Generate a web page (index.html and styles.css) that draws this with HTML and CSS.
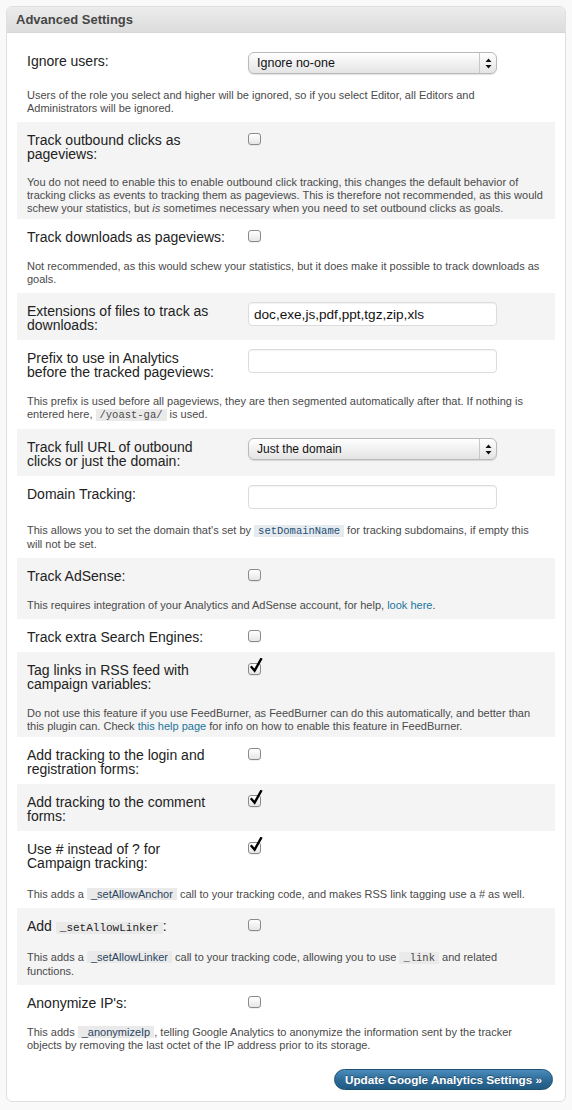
FILE: index.html
```html
<!DOCTYPE html>
<html>
<head>
<meta charset="utf-8">
<title>Advanced Settings</title>
<link rel="stylesheet" href="styles.css">
</head>
<body>
<div class="postbox">
  <h3 class="hndle">Advanced Settings</h3>
  <div class="inside">
    <div class="row">
      <div class="lbl">Ignore users:</div>
      <div class="ctl"><div class="select big"><span class="sel-text">Ignore no-one</span><span class="sel-arrows"><svg width="7" height="11" viewBox="0 0 7 11"><path d="M3.5 0.5 L6.5 4 L0.5 4 Z M0.5 7 L6.5 7 L3.5 10.5 Z" fill="#111"/></svg></span></div></div>
      <p class="desc">Users of the role you select and higher will be ignored, so if you select Editor, all Editors and Administrators will be ignored.</p>
    </div>
    <div class="row alt pb-sm">
      <div class="lbl">Track outbound clicks as pageviews:</div>
      <div class="ctl"><span class="cb"></span></div>
      <p class="desc mt-sm">You do not need to enable this to enable outbound click tracking, this changes the default behavior of tracking clicks as events to tracking them as pageviews. This is therefore not recommended, as this would schew your statistics, but <em>is</em> sometimes necessary when you need to set outbound clicks as goals.</p>
    </div>
    <div class="row">
      <div class="lbl">Track downloads as pageviews:</div>
      <div class="ctl"><span class="cb"></span></div>
      <p class="desc">Not recommended, as this would schew your statistics, but it does make it possible to track downloads as goals.</p>
    </div>
    <div class="row alt">
      <div class="lbl">Extensions of files to track as downloads:</div>
      <div class="ctl"><input class="txt" type="text" value="doc,exe,js,pdf,ppt,tgz,zip,xls"></div>
    </div>
    <div class="row">
      <div class="lbl">Prefix to use in Analytics<br>before the tracked pageviews:</div>
      <div class="ctl"><input class="txt" type="text" value=""></div>
      <p class="desc">This prefix is used before all pageviews, they are then segmented automatically after that. If nothing is entered here, <code class="mono">/yoast-ga/</code> is used.</p>
    </div>
    <div class="row alt">
      <div class="lbl">Track full URL of outbound clicks or just the domain:</div>
      <div class="ctl"><div class="select"><span class="sel-text">Just the domain</span><span class="sel-arrows"><svg width="7" height="11" viewBox="0 0 7 11"><path d="M3.5 0.5 L6.5 4 L0.5 4 Z M0.5 7 L6.5 7 L3.5 10.5 Z" fill="#111"/></svg></span></div></div>
    </div>
    <div class="row">
      <div class="lbl">Domain Tracking:</div>
      <div class="ctl"><input class="txt" type="text" value=""></div>
      <p class="desc">This allows you to set the domain that's set by <code class="mono blue">setDomainName</code> for tracking subdomains, if empty this will not be set.</p>
    </div>
    <div class="row alt">
      <div class="lbl">Track AdSense:</div>
      <div class="ctl"><span class="cb"></span></div>
      <p class="desc">This requires integration of your Analytics and AdSense account, for help, <a href="#">look here</a>.</p>
    </div>
    <div class="row">
      <div class="lbl">Track extra Search Engines:</div>
      <div class="ctl"><span class="cb"></span></div>
    </div>
    <div class="row alt pb-sm">
      <div class="lbl">Tag links in RSS feed with campaign variables:</div>
      <div class="ctl"><span class="cb on"><svg class="tick" width="14" height="16" viewBox="0 0 14 16"><path d="M2.6 9.2 L5.6 12.6 L12 1.2" fill="none" stroke="#000" stroke-width="2.4" stroke-linecap="square"/></svg></span></div>
      <p class="desc">Do not use this feature if you use FeedBurner, as FeedBurner can do this automatically, and better than this plugin can. Check <a href="#">this help page</a> for info on how to enable this feature in FeedBurner.</p>
    </div>
    <div class="row">
      <div class="lbl">Add tracking to the login and registration forms:</div>
      <div class="ctl"><span class="cb"></span></div>
    </div>
    <div class="row alt">
      <div class="lbl">Add tracking to the comment forms:</div>
      <div class="ctl"><span class="cb on"><svg class="tick" width="14" height="16" viewBox="0 0 14 16"><path d="M2.6 9.2 L5.6 12.6 L12 1.2" fill="none" stroke="#000" stroke-width="2.4" stroke-linecap="square"/></svg></span></div>
    </div>
    <div class="row">
      <div class="lbl">Use # instead of ? for Campaign tracking:</div>
      <div class="ctl"><span class="cb on"><svg class="tick" width="14" height="16" viewBox="0 0 14 16"><path d="M2.6 9.2 L5.6 12.6 L12 1.2" fill="none" stroke="#000" stroke-width="2.4" stroke-linecap="square"/></svg></span></div>
      <p class="desc mt-lg">This adds a <code class="sans">_setAllowAnchor</code> call to your tracking code, and makes RSS link tagging use a # as well.</p>
    </div>
    <div class="row alt">
      <div class="lbl">Add <code class="mono lblcode">_setAllowLinker</code>:</div>
      <div class="ctl"><span class="cb"></span></div>
      <p class="desc">This adds a <code class="sans">_setAllowLinker</code> call to your tracking code, allowing you to use <code class="mono">_link</code> and related functions.</p>
    </div>
    <div class="row">
      <div class="lbl">Anonymize IP's:</div>
      <div class="ctl"><span class="cb"></span></div>
      <p class="desc">This adds <code class="sans">_anonymizeIp</code>, telling Google Analytics to anonymize the information sent by the tracker objects by removing the last octet of the IP address prior to its storage.</p>
    </div>
    <div class="actions">
      <button class="btn" type="button">Update Google Analytics Settings »</button>
    </div>
  </div>
</div>
</body>
</html>
```
FILE: styles.css
```css
html, body {
  margin: 0;
  padding: 0;
  background: #f9f9f9;
}
body {
  font-family: "Liberation Sans", Arial, sans-serif;
  color: #333;
}
.postbox {
  margin: 6px 6px 0 6px;
  width: 558px;
  border: 1px solid #dfdfdf;
  border-radius: 6px;
  background: #fff;
  overflow: hidden;
}
.hndle {
  margin: 0;
  height: 25px;
  padding: 0 9px;
  font-size: 13px;
  font-weight: bold;
  line-height: 26px;
  color: #464646;
  background: linear-gradient(to bottom, #ececec, #dcdcdc);
  border-bottom: 1px solid #d6d6d6;
}
.inside {
  padding: 10px 10px 11px 10px;
}
.row {
  display: grid;
  grid-template-columns: 200px 1fr;
  column-gap: 21px;
  padding: 9px 10px 7px 10px;
}
.row.alt {
  background: #f4f4f4;
}
.row.pb-sm {
  padding-bottom: 4px;
}
.lbl {
  font-size: 14px;
  line-height: 14px;
  padding: 2px 0 1px 0;
  color: #222;
}
.ctl {
  display: flex;
  align-items: flex-start;
}
.desc {
  grid-column: 1 / -1;
  margin: 15px 0 0 0;
  font-size: 11px;
  line-height: 13px;
  color: #4a4a4a;
}
.desc.mt-sm {
  margin-top: 14px;
}
.desc.mt-lg {
  margin-top: 17px;
}
.desc a {
  color: #21759b;
  text-decoration: none;
}
code {
  background: #eaeaea;
  padding: 0 4px;
  font-size: 11px;
}
code.mono {
  font-family: "Liberation Mono", "DejaVu Sans Mono", monospace;
  font-size: 10.5px;
}
code.sans {
  font-family: "Liberation Sans", Arial, sans-serif;
  color: #2b4660;
}
code.blue {
  color: #1f4f76;
  background: #e6ebef;
}
code.lblcode {
  font-size: 11px;
  color: #222;
}
.txt {
  box-sizing: border-box;
  width: 249px;
  height: 24px;
  margin: 0;
  padding: 2px 5px;
  border: 1px solid #dcdcdc;
  border-radius: 4px;
  background: #fff;
  box-shadow: inset 0 1px 1px rgba(0,0,0,0.05);
  font-family: "Liberation Sans", Arial, sans-serif;
  font-size: 13.6px;
  color: #111;
  outline: none;
}
.select {
  box-sizing: border-box;
  width: 249px;
  height: 22px;
  border: 1px solid #b9b9b9;
  border-radius: 6px;
  background: linear-gradient(to bottom, #ffffff, #f1f1f1 50%, #e4e4e4);
  box-shadow: 0 1px 1px rgba(0,0,0,0.12);
  display: flex;
  align-items: center;
}
.sel-text {
  flex: 1;
  padding-left: 8px;
  font-size: 12px;
  color: #111;
}
.select.big .sel-text {
  font-size: 12.5px;
}
.sel-arrows {
  width: 16px;
  height: 20px;
  border-left: 1px solid #c8c8c8;
  display: flex;
  align-items: center;
  justify-content: center;
}
.cb {
  position: relative;
  box-sizing: border-box;
  width: 13px;
  height: 12px;
  margin-top: 2px;
  border: 1px solid #8a8a8a;
  border-radius: 3px;
  background: linear-gradient(to bottom, #ffffff, #e6e6e6);
  box-shadow: 0 1px 0 rgba(0,0,0,0.06);
}
.cb .tick {
  position: absolute;
  left: 0;
  top: -6px;
}
.actions {
  display: flex;
  justify-content: flex-end;
  padding-top: 10px;
  padding-right: 2px;
}
.btn {
  width: 219px;
  height: 21px;
  margin: 0;
  padding: 0;
  border: 1px solid #1d4f72;
  border-radius: 11px;
  background: linear-gradient(to bottom, #4a8cbb, #2c6a97 55%, #215a82);
  color: #fff;
  font-family: "Liberation Sans", Arial, sans-serif;
  font-size: 11.7px;
  font-weight: bold;
  text-shadow: 0 -1px 0 rgba(0,0,0,0.35);
  cursor: pointer;
}
```
